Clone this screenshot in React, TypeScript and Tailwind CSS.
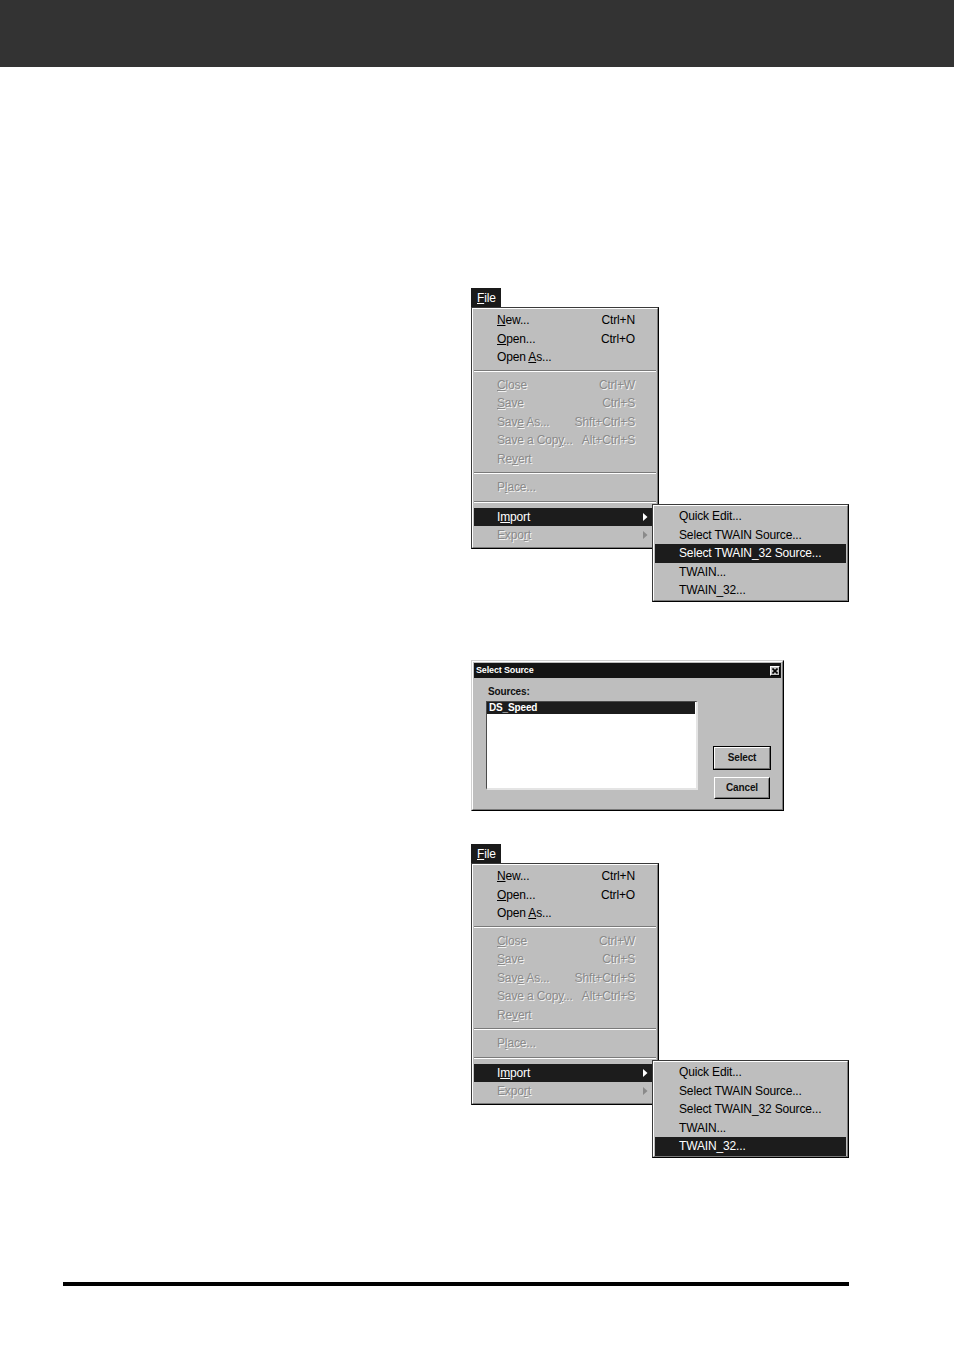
import React from "react";

type Item = {
  pre: string;
  u: string;
  post: string;
  sc?: string;
  dis?: boolean;
  hl?: boolean;
  arrow?: boolean;
};

type Block = { kind: "items"; items: Item[] } | { kind: "sep"; h: string };

function Label({ pre, u, post }: { pre: string; u: string; post: string }) {
  return (
    <span className="whitespace-pre">
      {pre}
      <span className="underline underline-offset-[1px] decoration-1">{u}</span>
      {post}
    </span>
  );
}

function Arrow({ color }: { color: string }) {
  return (
    <svg width="5" height="8" viewBox="0 0 5 8" className="block">
      <polygon points="0,0 4.5,4 0,8" fill={color} />
    </svg>
  );
}

function Row({ it }: { it: Item }) {
  const tone = it.hl
    ? "bg-[#1c1c1c] text-white"
    : it.dis
    ? "text-[#8a8a8a] [text-shadow:1px_1px_0_#f2f2f2]"
    : "text-black";
  return (
    <div
      className={`mx-[1px] flex h-[18.5px] items-center pl-[23px] ${
        it.arrow ? "pr-[8px]" : "pr-[21px]"
      } ${tone}`}
    >
      <span className="flex-1">
        <Label pre={it.pre} u={it.u} post={it.post} />
      </span>
      {it.sc && <span className="whitespace-pre">{it.sc}</span>}
      {it.arrow && <Arrow color={it.hl ? "#ffffff" : it.dis ? "#8a8a8a" : "#000000"} />}
    </div>
  );
}

function Sep({ h }: { h: string }) {
  return (
    <div className={`mx-[1px] flex flex-col justify-center ${h}`}>
      <div className="h-px bg-[#7a7a7a]" />
      <div className="h-px bg-white" />
    </div>
  );
}

const menuBlocks: Block[] = [
  {
    kind: "items",
    items: [
      { pre: "", u: "N", post: "ew...", sc: "Ctrl+N" },
      { pre: "", u: "O", post: "pen...", sc: "Ctrl+O" },
      { pre: "Open ", u: "A", post: "s..." },
    ],
  },
  { kind: "sep", h: "h-[9px]" },
  {
    kind: "items",
    items: [
      { pre: "", u: "C", post: "lose", sc: "Ctrl+W", dis: true },
      { pre: "", u: "S", post: "ave", sc: "Ctrl+S", dis: true },
      { pre: "Sav", u: "e", post: " As...", sc: "Shft+Ctrl+S", dis: true },
      { pre: "Save a Cop", u: "y", post: "...", sc: "Alt+Ctrl+S", dis: true },
      { pre: "Re", u: "v", post: "ert", dis: true },
    ],
  },
  { kind: "sep", h: "h-[10px]" },
  { kind: "items", items: [{ pre: "P", u: "l", post: "ace...", dis: true }] },
  { kind: "sep", h: "h-[11px]" },
  {
    kind: "items",
    items: [
      { pre: "I", u: "m", post: "port", hl: true, arrow: true },
      { pre: "Expo", u: "r", post: "t", dis: true, arrow: true },
    ],
  },
];

const subItems = [
  "Quick Edit...",
  "Select TWAIN Source...",
  "Select TWAIN_32 Source...",
  "TWAIN...",
  "TWAIN_32...",
];

function FileMenu({ hlIndex, className }: { hlIndex: number; className: string }) {
  return (
    <div className={`ml-[471px] ${className}`}>
      <div className="flex h-[19px] w-[30px] items-center bg-[#1a1a1a] pl-[6px] text-white">
        <Label pre="" u="F" post="ile" />
      </div>
      <div className="flex items-start">
        <div className="h-[242px] w-[188px] shrink-0 border border-[#3a3a3a] border-b-black border-r-black bg-[#bebebe]">
          <div className="h-full border border-b-[#7a7a7a] border-l-white border-r-[#7a7a7a] border-t-white pt-[2px]">
            {menuBlocks.map((b, i) =>
              b.kind === "sep" ? (
                <Sep key={i} h={b.h} />
              ) : (
                <div key={i}>
                  {b.items.map((it, j) => (
                    <Row key={j} it={it} />
                  ))}
                </div>
              )
            )}
          </div>
        </div>
        <div className="relative z-10 ml-[-7px] mt-[197px] h-[98px] w-[197px] shrink-0 border border-[#3a3a3a] border-b-black border-r-black bg-[#bebebe]">
          <div className="h-full border border-b-[#7a7a7a] border-l-white border-r-[#7a7a7a] border-t-white pt-[1px]">
            {subItems.map((s, i) => (
              <div
                key={i}
                className={`mx-[1px] flex h-[18.5px] items-center whitespace-pre pl-[24px] ${
                  i === hlIndex ? "bg-[#1c1c1c] text-white" : "text-black"
                }`}
              >
                {s}
              </div>
            ))}
          </div>
        </div>
      </div>
    </div>
  );
}

function Dialog() {
  return (
    <div className="ml-[471px] mt-[58px] h-[151px] w-[313px] border border-[#d0d0d0] border-b-black border-r-black bg-[#bebebe]">
      <div className="h-full border border-b-[#7a7a7a] border-l-white border-r-[#7a7a7a] border-t-white p-[1px]">
        <div className="flex h-[15px] items-center justify-between bg-[#141414] pl-[2px] pr-[1px]">
          <span className="text-[9px] font-bold leading-none text-white">Select Source</span>
          <div className="flex h-[10px] w-[10px] items-center justify-center border border-b-black border-l-white border-r-black border-t-white bg-[#c4c4c4]">
            <svg width="6" height="6" viewBox="0 0 6 6" className="block">
              <path d="M0.5 0.5 L5.5 5.5 M5.5 0.5 L0.5 5.5" stroke="#000" strokeWidth="1.6" />
            </svg>
          </div>
        </div>
        <div className="flex pl-[12px] pt-[8px]">
          <div className="flex flex-col">
            <div className="h-[12px] pl-[2px] text-[10px] font-bold leading-[12px] text-[#111]">Sources:</div>
            <div className="mt-[3px] h-[89px] w-[212px] border-l border-t border-b-2 border-r-2 border-l-[#4a4a4a] border-t-[#4a4a4a] border-b-[#e4e4e4] border-r-[#e4e4e4] bg-white">
              <div className="mr-[1px] flex h-[12px] items-center bg-[#1c1c1c] pl-[2px] text-[10px] font-bold leading-none text-white">
                DS_Speed
              </div>
            </div>
          </div>
          <div className="ml-[15px] flex flex-col pt-[60px]">
            <div className="h-[24px] w-[58px] border border-black">
              <div className="flex h-full items-center justify-center border border-b-[#6e6e6e] border-l-white border-r-[#6e6e6e] border-t-white text-[10px] font-bold leading-none text-[#111]">
                Select
              </div>
            </div>
            <div className="ml-[1px] mt-[7px] h-[22px] w-[56px] border border-b-black border-l-white border-r-black border-t-white">
              <div className="flex h-full items-center justify-center border border-b-[#7a7a7a] border-l-[#bebebe] border-r-[#7a7a7a] border-t-[#bebebe] text-[10px] font-bold leading-none text-[#111]">
                Cancel
              </div>
            </div>
          </div>
        </div>
      </div>
    </div>
  );
}

export default function App() {
  return (
    <div
      className="min-h-[1348px] w-[954px] bg-white text-[12px] leading-none tracking-[-0.15px]"
      style={{ fontFamily: '"Liberation Sans", Arial, sans-serif' }}
    >
      <div className="h-[67px] bg-[#333333]" />
      <FileMenu hlIndex={2} className="mt-[221px]" />
      <Dialog />
      <FileMenu hlIndex={4} className="mt-[33px]" />
      <div className="ml-[63px] mt-[124px] h-[4px] w-[786px] bg-black" />
    </div>
  );
}
